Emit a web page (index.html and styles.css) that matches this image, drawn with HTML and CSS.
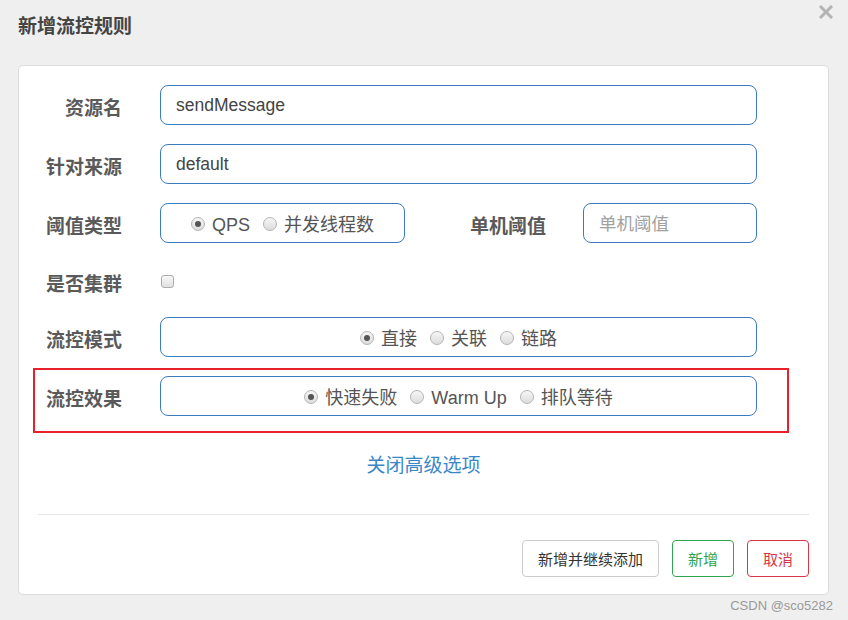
FILE: index.html
```html
<!DOCTYPE html>
<html lang="zh-CN">
<head>
<meta charset="utf-8">
<title>新增流控规则</title>
<link rel="stylesheet" href="styles.css">
</head>
<body>
<div class="modal">
  <div class="header">
    <h4 class="title">新增流控规则</h4>
    <svg class="close" width="14" height="14" viewBox="0 0 14 14"><path d="M2 2 L12 12 M12 2 L2 12" stroke="#b3b3b3" stroke-width="3" stroke-linecap="square"/></svg>
  </div>
  <div class="card">
    <div class="row">
      <div class="lbl">资源名</div>
      <div class="field wide"><span class="value">sendMessage</span></div>
    </div>
    <div class="row">
      <div class="lbl">针对来源</div>
      <div class="field wide"><span class="value">default</span></div>
    </div>
    <div class="row">
      <div class="lbl">阈值类型</div>
      <div class="field group narrow">
        <span class="opt"><span class="radio on"></span>QPS</span>
        <span class="opt"><span class="radio"></span>并发线程数</span>
      </div>
      <div class="lbl lbl2">单机阈值</div>
      <div class="field small"><span class="placeholder">单机阈值</span></div>
    </div>
    <div class="row short">
      <div class="lbl">是否集群</div>
      <span class="checkbox"></span>
    </div>
    <div class="row">
      <div class="lbl">流控模式</div>
      <div class="field group wide">
        <span class="opt"><span class="radio on"></span>直接</span>
        <span class="opt"><span class="radio"></span>关联</span>
        <span class="opt"><span class="radio"></span>链路</span>
      </div>
    </div>
    <div class="row marked">
      <div class="lbl">流控效果</div>
      <div class="field group wide">
        <span class="opt"><span class="radio on"></span>快速失败</span>
        <span class="opt"><span class="radio"></span>Warm Up</span>
        <span class="opt"><span class="radio"></span>排队等待</span>
      </div>
    </div>
    <div class="toggle"><a class="link">关闭高级选项</a></div>
    <div class="divider"></div>
    <div class="actions">
      <button class="btn">新增并继续添加</button>
      <button class="btn ok">新增</button>
      <button class="btn cancel">取消</button>
    </div>
  </div>
</div>
<div class="watermark">CSDN @sco5282</div>
</body>
</html>
```
FILE: styles.css
```css
*, *::before, *::after { box-sizing: border-box; }
html, body {
  margin: 0;
  padding: 0;
  background: #efefef;
  width: 848px;
  height: 620px;
  overflow: hidden;
  font-family: "Liberation Sans", "Noto Sans CJK SC", sans-serif;
}
.modal {
  position: relative;
  width: 848px;
  height: 620px;
}
.header {
  display: flex;
  justify-content: space-between;
  align-items: flex-start;
  height: 65px;
  padding: 0 15px 0 18px;
}
.title {
  margin: 14px 0 0;
  font-size: 19px;
  line-height: 26px;
  font-weight: bold;
  color: #444;
}
.close {
  margin-top: 5px;
}
.card {
  margin-left: 18px;
  width: 811px;
  height: 530px;
  background: #fff;
  border: 1px solid #dcdcdc;
  border-radius: 5px;
  padding: 19px 19px 0 0;
}
.row {
  position: relative;
  display: flex;
  align-items: center;
  height: 40px;
  margin-bottom: 19px;
}
.row.short {
  height: 36px;
}
.lbl {
  width: 103px;
  margin-right: 38px;
  padding-top: 7px;
  text-align: right;
  font-size: 19px;
  font-weight: bold;
  color: #5a5a5a;
  line-height: 24px;
}
.short .lbl {
  padding-top: 9px;
}
.lbl2 {
  width: 141px;
  margin-right: 37px;
}
.field {
  height: 40px;
  border: 1px solid #3b7cc0;
  border-radius: 8px;
  display: flex;
  align-items: center;
  padding: 1px 15px 0;
  font-size: 17.5px;
  color: #444;
}
.wide { width: 597px; }
.narrow { width: 245px; }
.small { width: 174px; }
.placeholder { color: #a0a0a0; font-size: 17.5px; margin-top: -2px; }
.group {
  justify-content: center;
  gap: 13px;
  font-size: 18px;
  color: #555;
  padding-top: 3px;
}
.opt {
  display: flex;
  align-items: center;
  line-height: 24px;
}
.radio {
  width: 14px;
  height: 14px;
  border-radius: 50%;
  border: 1px solid #b5b5b5;
  background: linear-gradient(#f6f6f6, #dcdcdc);
  margin-right: 7px;
  margin-top: -2px;
  position: relative;
}
.radio.on::after {
  content: "";
  position: absolute;
  left: 3px;
  top: 3px;
  width: 6px;
  height: 6px;
  border-radius: 50%;
  background: #555;
}
.checkbox {
  width: 13px;
  height: 13px;
  border: 1px solid #adadad;
  border-radius: 3px;
  background: linear-gradient(#f8f8f8, #e0e0e0);
  margin-left: 1px;
  margin-top: 2px;
}
.marked::after {
  content: "";
  position: absolute;
  left: 14px;
  top: -8px;
  width: 756px;
  height: 65px;
  border: 2px solid #e8202a;
  pointer-events: none;
}
.toggle {
  margin-top: 38px;
  padding-left: 19px;
  text-align: center;
  line-height: 24px;
}
.link {
  font-size: 19px;
  color: #3a87c8;
}
.divider {
  margin: 35px 0 0 19px;
  height: 1px;
  background: #e5e5e5;
}
.actions {
  display: flex;
  justify-content: flex-end;
  gap: 13px;
  margin-top: 25px;
}
.btn {
  height: 37px;
  padding: 0 15px;
  font-family: "Liberation Sans", "Noto Sans CJK SC", sans-serif;
  font-size: 15px;
  background: #fff;
  border: 1px solid #cccccc;
  border-radius: 4px;
  color: #333;
}
.btn.ok {
  border-color: #2ea44f;
  color: #2ea44f;
}
.btn.cancel {
  border-color: #dc3545;
  color: #dc3545;
}
.watermark {
  position: absolute;
  right: 15px;
  bottom: 7px;
  font-size: 13px;
  color: #9a9a9a;
}
```
